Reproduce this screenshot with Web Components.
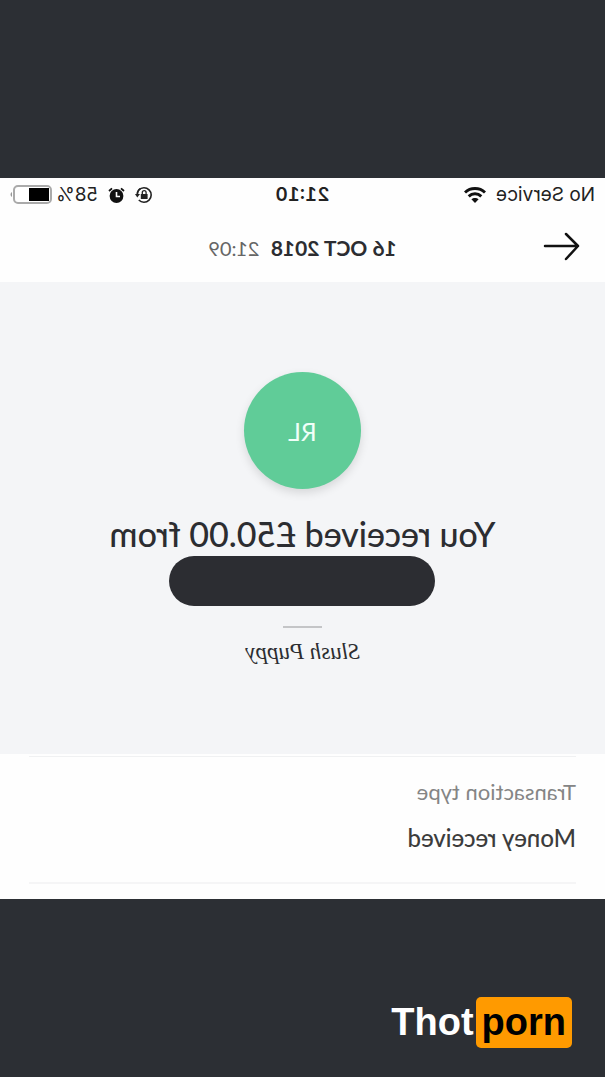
<!DOCTYPE html>
<html lang="en">
<head>
<meta charset="utf-8">
<meta name="viewport" content="width=device-width, initial-scale=1">
<title>Transaction</title>
<style>
    body {
        margin: 0;
        min-height: 100vh;
        display: grid;
        grid-template-rows: 1fr auto 1fr;
        background: #2c2f34;
        color: #2c2d31;
        font-family: Lato, "Liberation Sans", sans-serif;
        font-variant-ligatures: none;
    }

    main {
        grid-row: 2;
        background: #fefefe;
        transform: scaleX(-1);
    }
</style>
</head>
<body>
    <main>
        <status-bar></status-bar>
        <date-bar date="16 OCT 2018" time="21:09"></date-bar>
        <payment-summary initials="RL">
            You received £50.00 from
            <span slot="note">Slush Puppy</span>
        </payment-summary>
        <detail-row label="Transaction type">Money received</detail-row>
    </main>
    <brand-mark></brand-mark>

<script>
class StatusBar extends HTMLElement {
    constructor() {
        super();
        this.attachShadow({ mode: "open" });
    }

    connectedCallback() {
        this.shadowRoot.innerHTML = `
            <style>
            :host {
                display: grid;
                grid-template-columns: 1fr auto 1fr;
                align-items: center;
                height: 34px;
                padding: 0 10px;
                color: #222;
                font: 19px/34px Inter, "Liberation Sans", sans-serif;
            }
            div {
                display: flex;
                align-items: center;
            }
            .network {
                gap: 10px;
            }
            .power {
                justify-content: flex-end;
                gap: 10px;
            }
            .charge {
                display: flex;
                align-items: center;
                gap: 4px;
            }
            strong {
                font-weight: 600;
                font-variant-numeric: tabular-nums;
            }
            svg {
                display: block;
            }
            </style>
            <div class="network">
                <span>No Service</span>
                <svg width="22" height="16" viewBox="0 0 22 16" fill="none" stroke="#111" stroke-width="3">
                    <path d="M1 5.5C6.500 .3 15.500 .3 21 5.500"/>
                    <path d="M4.700 9.300c3.600-3.300 9-3.300 12.600 0"/>
                    <path d="M11 16l-3.600-3.700c2-1.800 5.200-1.800 7.200 0z" fill="#111" stroke="none"/>
                </svg>
            </div>
            <strong>21:10</strong>
            <div class="power">
                <svg width="18" height="18" viewBox="0 0 18 18" fill="none" stroke="#222" stroke-width="1.600">
                    <path d="M14.200 4A7.200 7.200 0 1 0 14.200 14"/>
                    <path d="M12.800 2.700A7.200 7.200 0 0 1 15.800 8.500"/>
                    <path d="M13 8h5l-2.300 3.600z" fill="#222" stroke="none"/>
                    <rect x="5.400" y="8" width="6.800" height="5" fill="#222" stroke="none"/>
                    <path d="M6.900 8V6.600a1.900 1.900 0 0 1 3.800 0V8" stroke-width="1.300"/>
                </svg>
                <svg width="17" height="17" viewBox="0 0 17 17">
                    <circle cx="8.500" cy="9" r="6.900" fill="#111"/>
                    <path d="M1 4L4 1.300M16 4L13 1.300" stroke="#111" stroke-width="1.800"/>
                    <path d="M8.500 5v4.500H5" fill="none" stroke="#fff" stroke-width="1.600"/>
                </svg>
                <span class="charge">
                    <span>58%</span>
                    <svg width="42" height="20" viewBox="0 0 42 20">
                        <rect x="1" y="1" width="37" height="17" rx="4" fill="#fff" stroke="#aaa" stroke-width="2"/>
                        <rect x="3" y="3" width="20" height="13" fill="#000"/>
                        <path d="M40 7c2 1 2 4 0 5z" fill="#999"/>
                    </svg>
                </span>
            </div>
        `;
    }
}

class DateBar extends HTMLElement {
    constructor() {
        super();
        this.attachShadow({ mode: "open" });
    }

    connectedCallback() {
        this.shadowRoot.innerHTML = `
            <style>
            :host {
                display: grid;
                grid-template-columns: 1fr auto 1fr;
                align-items: center;
                height: 70px;
                padding: 0 24px;
            }
            button {
                justify-self: start;
                padding: 0;
                border: 0;
                background: none;
            }
            svg {
                display: block;
            }
            h1 {
                margin: 0;
                font-size: 21px;
                font-weight: 700;
            }
            time {
                margin-left: 6px;
                font-size: 20px;
                font-weight: 400;
                color: #666;
            }
            </style>
            <button aria-label="Back">
                <svg width="38" height="30" viewBox="0 0 38 30" fill="none" stroke="#111" stroke-width="2.500" stroke-linecap="round" stroke-linejoin="round">
                    <path d="M36 14H3M15 2L3 14l12 13"/>
                </svg>
            </button>
            <h1>${this.getAttribute("date")} <time>${this.getAttribute("time")}</time></h1>
        `;
    }
}

class PaymentSummary extends HTMLElement {
    constructor() {
        super();
        this.attachShadow({ mode: "open" });
    }

    connectedCallback() {
        this.shadowRoot.innerHTML = `
            <style>
            :host {
                display: flex;
                flex-direction: column;
                align-items: center;
                padding: 90px 24px 88px;
                background: #f4f5f7;
                text-align: center;
            }
            .avatar {
                display: grid;
                place-items: center;
                width: 117px;
                height: 117px;
                border-radius: 50%;
                background: #60cc98;
                box-shadow: 0 4px 10px rgba(0, 0, 0, 0.12);
                color: #f0fff8;
                font-size: 25px;
            }
            h2 {
                margin: 24px 0 2px;
                font-size: 34px;
                font-weight: 500;
                line-height: 41px;
            }
            .hidden-name {
                width: 266px;
                height: 50px;
                border-radius: 25px;
                background: #2c2d32;
            }
            hr {
                width: 39px;
                height: 2px;
                margin: 20px 0 10px;
                border: 0;
                background: #c4c5c7;
            }
            .note {
                font: italic 23px/28px "Liberation Serif", serif;
            }
            </style>
            <div class="avatar">${this.getAttribute("initials")}</div>
            <h2><slot></slot></h2>
            <div class="hidden-name"></div>
            <hr>
            <div class="note"><slot name="note"></slot></div>
        `;
    }
}

class DetailRow extends HTMLElement {
    constructor() {
        super();
        this.attachShadow({ mode: "open" });
    }

    connectedCallback() {
        this.shadowRoot.innerHTML = `
            <style>
            :host {
                display: block;
                padding: 2px 29px 15px;
            }
            dl {
                margin: 0;
                padding: 19px 0 28px;
                border-top: 1px solid #f0f1f2;
                border-bottom: 2px solid #f5f5f6;
            }
            dt {
                color: #858585;
                font-size: 22px;
                line-height: 32px;
            }
            dd {
                margin: 14px 0 0;
                color: #3c3c3c;
                font-size: 24px;
                font-weight: 500;
                line-height: 32px;
            }
            </style>
            <dl>
                <dt>${this.getAttribute("label")}</dt>
                <dd><slot></slot></dd>
            </dl>
        `;
    }
}

class BrandMark extends HTMLElement {
    constructor() {
        super();
        this.attachShadow({ mode: "open" });
    }

    connectedCallback() {
        this.shadowRoot.innerHTML = `
            <style>
            :host {
                grid-row: 3;
                display: flex;
                align-items: flex-end;
                justify-content: flex-end;
                gap: 2px;
                padding: 0 33px 29px;
                color: #fff;
                font: bold 38px/51px "Liberation Sans", sans-serif;
            }
            .box {
                padding: 0 6px;
                border-radius: 5px;
                background: #ff9a00;
                color: #000;
            }
            </style>
            <span>Thot</span>
            <span class="box">porn</span>
        `;
    }
}

customElements.define("status-bar", StatusBar);
customElements.define("date-bar", DateBar);
customElements.define("payment-summary", PaymentSummary);
customElements.define("detail-row", DetailRow);
customElements.define("brand-mark", BrandMark);
</script>
</body>
</html>
